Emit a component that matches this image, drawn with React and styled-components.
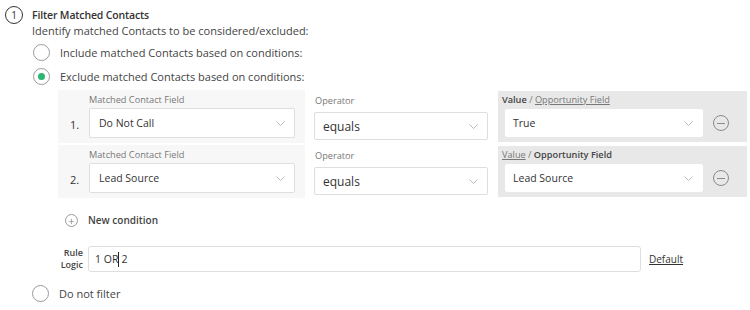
import React from "react";
import styled, { createGlobalStyle } from "styled-components";

const GlobalStyle = createGlobalStyle`
  body {
    margin: 0;
    background: #ffffff;
    font-family: "Open Sans", "DejaVu Sans", sans-serif;
    color: #333;
  }
`;

const Page = styled.div`
  display: flex;
  width: 750px;
  height: 310px;
  padding: 6px 0 0 5px;
  box-sizing: border-box;
  overflow: hidden;
`;

const StepBadge = styled.div`
  width: 18px;
  height: 18px;
  border: 1px solid #333;
  border-radius: 50%;
  box-sizing: border-box;
  display: flex;
  align-items: center;
  justify-content: center;
  font-size: 10px;
  flex-shrink: 0;
`;

const Content = styled.div`
  margin-left: 9px;
  display: flex;
  flex-direction: column;
`;

const Title = styled.div`
  font-size: 10.5px;
  font-weight: 600;
  line-height: 16px;
  margin-top: 1px;
  letter-spacing: -0.15px;
`;

const Description = styled.div`
  font-size: 11px;
  line-height: 16px;
  color: #444;
`;

const OptionRow = styled.div`
  display: flex;
  align-items: center;
  height: 24px;
  margin-left: ${(p) => p.$indent || 0}px;
  margin-top: ${(p) => p.$top || 0}px;
  font-size: 11px;
  color: #444;
`;

const Radio = styled.span`
  width: 17px;
  height: 17px;
  border: 1px solid #9a9a9a;
  border-radius: 50%;
  box-sizing: border-box;
  display: flex;
  align-items: center;
  justify-content: center;
  margin-right: 10px;
  background: #fff;

  &::after {
    content: "";
    display: ${(p) => (p.$checked ? "block" : "none")};
    width: 7px;
    height: 7px;
    border-radius: 50%;
    background: #2cb573;
  }
`;

const Options = styled.div`
  margin-top: 1px;
`;

const Conditions = styled.div`
  margin: 2px 0 0 26px;
  display: flex;
  flex-direction: column;
  gap: 2px;
`;

const ConditionRow = styled.div`
  display: flex;
  height: 53px;
`;

const FieldCell = styled.div`
  display: flex;
  width: 247px;
  background: #f7f7f7;
  padding: 0 10px 0 12px;
  box-sizing: border-box;
`;

const RowNumber = styled.div`
  width: 19px;
  padding-top: 28px;
  font-size: 11px;
  color: #333;
  line-height: 14px;
`;

const Column = styled.div`
  display: flex;
  flex-direction: column;
`;

const OperatorCell = styled.div`
  width: 193px;
  padding: 0 10px 0 9px;
  box-sizing: border-box;
  display: flex;
  flex-direction: column;
`;

const ValueCell = styled.div`
  display: flex;
  align-items: flex-start;
  width: 249px;
  margin: 1px 0;
  padding: 0 0 0 7px;
  background: #e8e8e8;
  box-sizing: border-box;
`;

const FieldLabel = styled.div`
  font-size: 9.2px;
  line-height: 12px;
  color: #777;
  padding-top: ${(p) => p.$top}px;
  margin-left: ${(p) => p.$shift || 0}px;
  white-space: nowrap;

  b {
    font-weight: 600;
    color: #444;
  }

  u {
    color: #777;
  }
`;

const Select = styled.div`
  display: flex;
  align-items: center;
  justify-content: space-between;
  height: ${(p) => p.$h}px;
  width: ${(p) => p.$w}px;
  margin-top: ${(p) => p.$gap}px;
  padding: 0 9px 0 ${(p) => p.$pl}px;
  box-sizing: border-box;
  background: #fff;
  border: 1px solid ${(p) => (p.$flat ? "#fff" : "#dedede")};
  border-radius: 2px;
  font-size: ${(p) => p.$size || 10.5}px;
  color: #333;
`;

const RemoveButton = styled.button`
  margin: 24px 0 0 10px;
  width: 16px;
  height: 16px;
  padding: 0;
  border: 1px solid #8a8a8a;
  border-radius: 50%;
  background: transparent;
  display: flex;
  align-items: center;
  justify-content: center;
  flex-shrink: 0;

  &::after {
    content: "";
    width: 8px;
    height: 1px;
    background: #8a8a8a;
  }
`;

const NewCondition = styled.div`
  display: flex;
  align-items: center;
  margin: 15px 0 0 33px;
  font-size: 10px;
  font-weight: 600;
  color: #444;
`;

const PlusCircle = styled.span`
  width: 13px;
  height: 13px;
  border: 1px solid #9a9a9a;
  border-radius: 50%;
  box-sizing: border-box;
  display: flex;
  align-items: center;
  justify-content: center;
  margin-right: 10px;
  color: #888;
  font-size: 11px;
  font-weight: 400;
  line-height: 1;
`;

const RuleRow = styled.div`
  display: flex;
  align-items: center;
  margin: 19px 0 0 26px;
`;

const RuleLabel = styled.div`
  width: 25px;
  text-align: right;
  font-size: 9px;
  font-weight: 600;
  line-height: 12px;
  color: #444;
  margin-right: 5px;
`;

const RuleInput = styled.div`
  width: 553px;
  height: 26px;
  border: 1px solid #dedede;
  border-radius: 3px;
  box-sizing: border-box;
  display: flex;
  align-items: center;
  padding-left: 6px;
  font-size: 10.5px;
  color: #333;
`;

const Caret = styled.span`
  display: inline-block;
  width: 1px;
  height: 15px;
  background: #222;
  margin: 0 2px 0 0;
`;

const DefaultLink = styled.a`
  margin-left: 8px;
  font-size: 10px;
  color: #333;
  text-decoration: underline;
`;

const Chevron = () => (
  <svg width="9" height="5" viewBox="0 0 9 5">
    <polyline points="0.5,0.5 4.5,4.5 8.5,0.5" fill="none" stroke="#aaa" strokeWidth="0.8" />
  </svg>
);

const conditions = [
  { num: "1.", field: "Do Not Call", op: "equals", value: "True", mode: "value" },
  { num: "2.", field: "Lead Source", op: "equals", value: "Lead Source", mode: "field" },
];

function Condition({ c }) {
  return (
    <ConditionRow>
      <FieldCell>
        <RowNumber>{c.num}</RowNumber>
        <Column>
          <FieldLabel $top={4}>Matched Contact Field</FieldLabel>
          <Select $h={30} $w={206} $gap={2} $pl={9}>
            {c.field}
            <Chevron />
          </Select>
        </Column>
      </FieldCell>
      <OperatorCell>
        <FieldLabel $top={5} $shift={1}>Operator</FieldLabel>
        <Select $h={28} $w={174} $gap={5} $pl={8} $size={12}>
          {c.op}
          <Chevron />
        </Select>
      </OperatorCell>
      <ValueCell>
        <Column>
          <FieldLabel $top={3} $shift={-3}>
            {c.mode === "value" ? (
              <>
                <b>Value</b> / <u>Opportunity Field</u>
              </>
            ) : (
              <>
                <u>Value</u> / <b>Opportunity Field</b>
              </>
            )}
          </FieldLabel>
          <Select $h={28} $w={198} $gap={3} $pl={7} $flat>
            {c.value}
            <Chevron />
          </Select>
        </Column>
        <RemoveButton aria-label="Remove condition" />
      </ValueCell>
    </ConditionRow>
  );
}

export default function App() {
  return (
    <>
      <GlobalStyle />
      <Page>
        <StepBadge>1</StepBadge>
        <Content>
          <Title>Filter Matched Contacts</Title>
          <Description>Identify matched Contacts to be considered/excluded:</Description>
          <Options>
            <OptionRow $indent={1}>
              <Radio />
              Include matched Contacts based on conditions:
            </OptionRow>
            <OptionRow $indent={1}>
              <Radio $checked />
              Exclude matched Contacts based on conditions:
            </OptionRow>
          </Options>
          <Conditions>
            {conditions.map((c) => (
              <Condition key={c.num} c={c} />
            ))}
          </Conditions>
          <NewCondition>
            <PlusCircle>+</PlusCircle>
            New condition
          </NewCondition>
          <RuleRow>
            <RuleLabel>
              Rule
              <br />
              Logic
            </RuleLabel>
            <RuleInput>
              1 OR<Caret />2
            </RuleInput>
            <DefaultLink>Default</DefaultLink>
          </RuleRow>
          <OptionRow $top={9}>
            <Radio />
            Do not filter
          </OptionRow>
        </Content>
      </Page>
    </>
  );
}
